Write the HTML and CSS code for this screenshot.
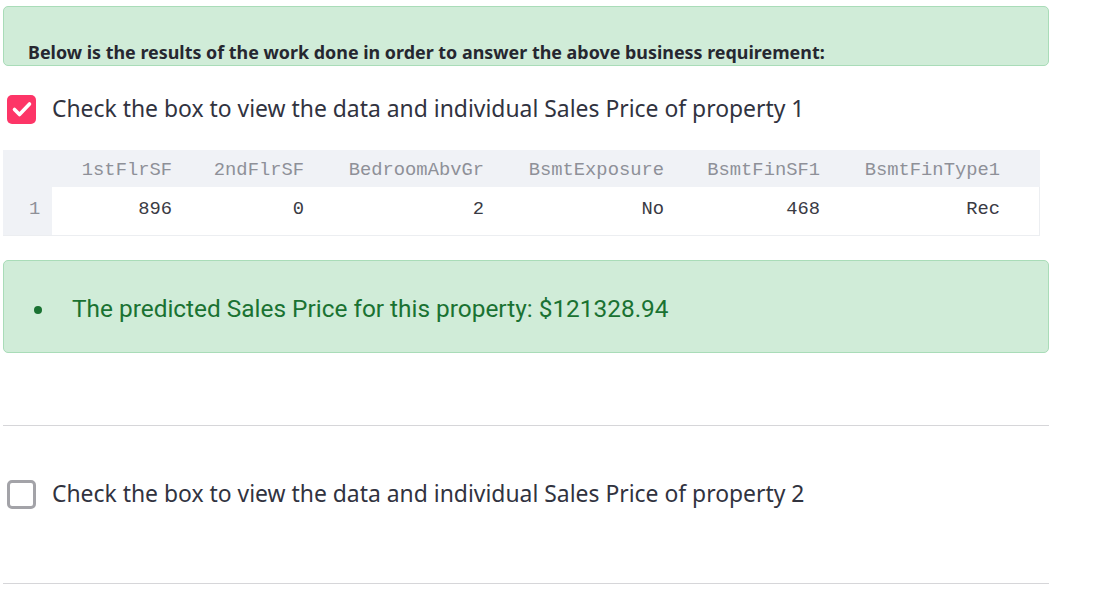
FILE: index.html
```html
<!DOCTYPE html>
<html>
<head>
<meta charset="utf-8">
<link rel="stylesheet" href="styles.css">
</head>
<body>
<div class="page">
  <div class="alert alert-top">
    <p class="alert-title">Below is the results of the work done in order to answer the above business requirement:</p>
  </div>

  <label class="check-row check-row-first">
    <span class="box box-on">
      <svg viewBox="0 0 24 24" width="24" height="24"><path d="M4.5 12.5l5 5L19.5 7" fill="none" stroke="#fff" stroke-width="3.6" stroke-linecap="round" stroke-linejoin="round"/></svg>
    </span>
    <span class="check-label">Check the box to view the data and individual Sales Price of property 1</span>
  </label>

  <div class="table">
    <div class="trow thead">
      <div class="cell idx"></div>
      <div class="cell c1">1stFlrSF</div>
      <div class="cell c2">2ndFlrSF</div>
      <div class="cell c3">BedroomAbvGr</div>
      <div class="cell c4">BsmtExposure</div>
      <div class="cell c5">BsmtFinSF1</div>
      <div class="cell c6">BsmtFinType1</div>
      <div class="cell rest"></div>
    </div>
    <div class="trow tbody">
      <div class="cell idx">1</div>
      <div class="cell c1">896</div>
      <div class="cell c2">0</div>
      <div class="cell c3">2</div>
      <div class="cell c4">No</div>
      <div class="cell c5">468</div>
      <div class="cell c6">Rec</div>
      <div class="cell rest"></div>
    </div>
  </div>

  <div class="alert alert-price">
    <ul class="price-list">
      <li>The predicted Sales Price for this property: $121328.94</li>
    </ul>
  </div>

  <hr class="rule rule-first">

  <label class="check-row check-row-second">
    <span class="box box-off"></span>
    <span class="check-label">Check the box to view the data and individual Sales Price of property 2</span>
  </label>

  <hr class="rule rule-second">
</div>
</body>
</html>
```

FILE: styles.css
```css
html, body {
  margin: 0;
  padding: 0;
  background: #ffffff;
}

.page {
  width: 1046px;
  margin-left: 3px;
  padding-top: 6px;
  font-family: "Noto Sans", "Open Sans", sans-serif;
  color: #31333f;
}

.alert {
  background: #d0ecd8;
  border: 1px solid #a9dcb8;
  border-radius: 5px;
  box-sizing: border-box;
}

.alert-top {
  height: 60px;
  padding: 34px 0 0 24px;
}

.alert-title {
  margin: 0;
  font-weight: 700;
  font-size: 17.9px;
  line-height: 22px;
  color: #262730;
}

.check-row {
  display: flex;
  align-items: center;
  gap: 16px;
  padding-left: 4px;
  height: 30px;
}

.check-row-first {
  margin-top: 28px;
}

.box {
  width: 29px;
  height: 29px;
  box-sizing: border-box;
  border-radius: 5px;
  display: flex;
  align-items: center;
  justify-content: center;
  flex: none;
}

.box-on {
  background: #fd3567;
}

.box-off {
  border: 3px solid #a3a3a8;
}

.check-label {
  font-size: 22.9px;
  line-height: 30px;
  color: #31333f;
}

.table {
  margin-top: 26px;
  width: 1037px;
  font-family: "Liberation Mono", "DejaVu Sans Mono", monospace;
  font-size: 18.8px;
}

.trow {
  display: flex;
}

.thead {
  height: 37px;
  background: #f0f2f6;
  color: #8e9098;
  align-items: center;
  padding-top: 3px;
  box-sizing: border-box;
}

.tbody {
  height: 49px;
  color: #3a3b44;
  border-bottom: 1px solid #eceef1;
  box-sizing: border-box;
}

.cell {
  text-align: right;
  box-sizing: border-box;
  white-space: nowrap;
}

.tbody .cell {
  background: #ffffff;
  padding-top: 11px;
}

.tbody .cell.idx {
  background: #f0f2f6;
  color: #8e9098;
  text-align: left;
  padding-left: 26px;
}

.tbody .cell.rest {
  border-right: 1px solid #eceef1;
}

.idx { width: 49px; }
.c1 { width: 120px; }
.c2 { width: 132px; }
.c3 { width: 180px; }
.c4 { width: 180px; }
.c5 { width: 156px; }
.c6 { width: 180px; }
.rest { flex: 1; }

.alert-price {
  margin-top: 24px;
  height: 93px;
  display: flex;
  align-items: center;
}

.price-list {
  margin: 0;
  padding: 4px 0 0 0;
  list-style: none;
}

.price-list li {
  font-family: Roboto, "Noto Sans", sans-serif;
  font-size: 24.4px;
  line-height: 32px;
  color: #1a7232;
  padding-left: 68px;
  position: relative;
}

.price-list li::before {
  content: "";
  position: absolute;
  left: 30px;
  top: 13px;
  width: 8px;
  height: 8px;
  border-radius: 50%;
  background: #1a7232;
}

.rule {
  border: 0;
  border-top: 1px solid #d6d6d9;
  margin: 0;
}

.rule-first {
  margin-top: 72px;
}

.check-row-second {
  margin-top: 53px;
}

.rule-second {
  margin-top: 74px;
}
```
